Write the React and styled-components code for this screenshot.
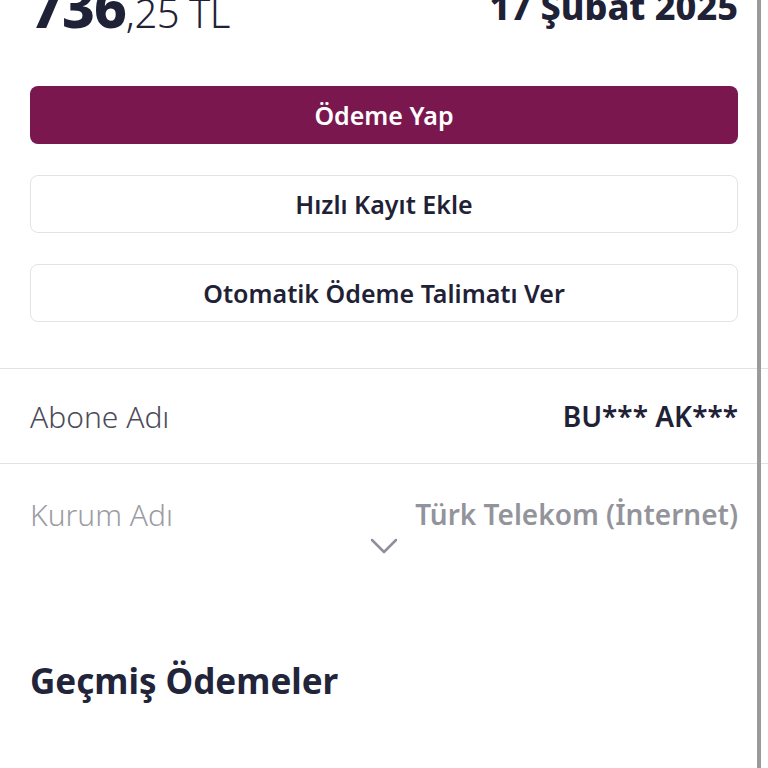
import styled, { createGlobalStyle } from 'styled-components'

const Global = createGlobalStyle`
	html, body {
		margin: 0;
		padding: 0;
		background: #fff;
	}
	body {
		font-family: "Noto Sans", "Open Sans", sans-serif;
		color: #1f2236;
		overflow: hidden;
	}
`

const Page = styled.div`
	position: relative;
	width: 768px;
	height: 768px;
	overflow: hidden;
`

const Scrollbar = styled.div`
	position: absolute;
	top: 0;
	right: 7px;
	width: 4px;
	height: 100%;
	background: #9b9b9b;
`

const Summary = styled.div`
	display: flex;
	justify-content: space-between;
	align-items: flex-start;
	padding: 0 30px;
	margin-top: -22px;
	height: 66px;
`

const Amount = styled.div`
	font-size: 40px;
	font-weight: 300;
	line-height: 60px;
	letter-spacing: -0.5px;
	margin-top: -2px;
	b {
		font-size: 57px;
		font-weight: 800;
		letter-spacing: -1px;
	}
`

const DueDate = styled.div`
	font-size: 36px;
	font-weight: 800;
	line-height: 48px;
	margin-top: 5px;
`

const Actions = styled.div`
	display: flex;
	flex-direction: column;
	gap: 31px;
	padding: 42px 30px 0;
`

const Button = styled.button`
	height: 58px;
	border-radius: 8px;
	font-family: "Noto Sans", sans-serif;
	font-size: 25px;
	font-weight: 600;
	cursor: pointer;
	background: ${p => (p.$primary ? '#7b174f' : '#fff')};
	color: ${p => (p.$primary ? '#fff' : '#1f2236')};
	border: ${p => (p.$primary ? 'none' : '1.5px solid #e3e3e6')};
`

const Details = styled.div`
	margin-top: 46px;
	border-top: 1.5px solid #e2e2e5;
`

const Row = styled.div`
	position: relative;
	display: flex;
	justify-content: space-between;
	align-items: center;
	padding: 0 30px;
	height: ${p => p.$h || 94}px;
	border-bottom: ${p => (p.$last ? 'none' : '1.5px solid #e2e2e5')};
	opacity: ${p => (p.$faded ? 0.55 : 1)};
`

const Label = styled.span`
	font-size: 30px;
	font-weight: 300;
	color: #4a4c58;
`

const Value = styled.span`
	font-size: 28px;
	font-weight: 600;
	color: ${p => p.$muted ? '#3b3d4a' : '#1f2236'};
`

const Chevron = styled.div`
	display: flex;
	justify-content: center;
	margin-top: -27px;
	color: #8d8ea0;
`

const History = styled.h2`
	margin: 102px 30px 0;
	font-size: 35px;
	font-weight: 700;
	color: #22253a;
`

export default function App() {
	return (
		<Page>
			<Global />
			<Summary>
				<Amount><b>736</b>,25 TL</Amount>
				<DueDate>17 Şubat 2025</DueDate>
			</Summary>
			<Actions>
				<Button $primary>Ödeme Yap</Button>
				<Button>Hızlı Kayıt Ekle</Button>
				<Button>Otomatik Ödeme Talimatı Ver</Button>
			</Actions>
			<Details>
				<Row>
					<Label>Abone Adı</Label>
					<Value>BU*** AK***</Value>
				</Row>
				<Row $faded $last $h={100}>
					<Label>Kurum Adı</Label>
					<Value $muted>Türk Telekom (İnternet)</Value>
				</Row>
				<Chevron>
					<svg width="28" height="18" viewBox="0 0 28 18" fill="none">
						<path d="M2 3 L14 15 L26 3" stroke="currentColor" strokeWidth="2.5" strokeLinecap="round" strokeLinejoin="round" />
					</svg>
				</Chevron>
			</Details>
			<History>Geçmiş Ödemeler</History>
			<Scrollbar />
		</Page>
	)
}
